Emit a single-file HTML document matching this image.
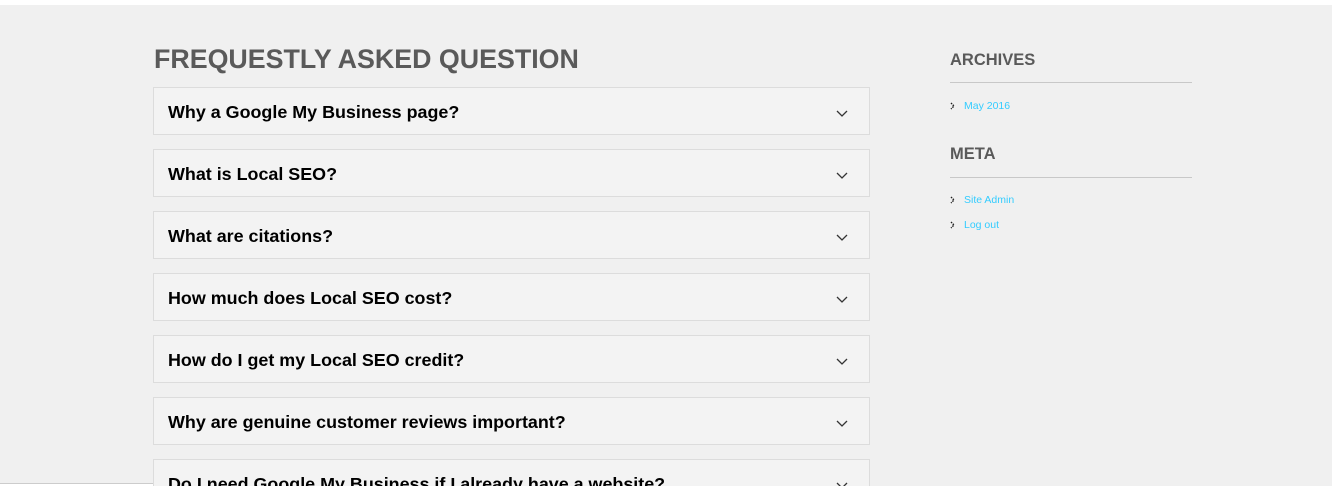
<!DOCTYPE html>
<html style="height:486px;overflow:hidden"><head><style>
body{margin:0;width:1332px;height:486px;overflow:hidden;background:#f0f0f0;font-family:"Liberation Sans",Arial,sans-serif;position:relative}
.top{position:absolute;left:0;top:0;width:1332px;height:5px;background:#fff}
h1{position:absolute;left:154px;top:44px;margin:0;font-size:26.8px;font-weight:bold;color:#5a5a5a}
.q{position:absolute;left:153px;width:715px;height:46px;border:1px solid #dcdcdc;background:#f3f3f3}
.q span{position:absolute;left:14px;top:14px;font-size:17.9px;font-weight:bold;color:#000}
.q svg{position:absolute;left:682px;top:22px}
.side{position:absolute;left:950px;width:242px}
.side h3{margin:0;font-size:16.5px;font-weight:bold;color:#5a5a5a}
.side hr{border:0;border-top:1px solid #c8c8c8;margin:0}
.li{position:absolute;left:950px;font-size:10.5px;color:#33ccff}
.li svg{position:absolute;left:0;top:2px}
.li b{font-weight:normal;margin-left:14px}
.bl{position:absolute;left:0;top:483px;width:153px;height:3px;background:#fff;border-top:1px solid #ccc}
</style></head><body>
<div class="top"></div>
<h1>FREQUESTLY ASKED QUESTION</h1>
<div class="q" style="top:87px"><span>Why a Google My Business page?</span><svg width="12" height="8"><path d="M1 1L6 6L11 1" stroke="#333" stroke-width="1.3" fill="none"/></svg></div>
<div class="q" style="top:149px"><span>What is Local SEO?</span><svg width="12" height="8"><path d="M1 1L6 6L11 1" stroke="#333" stroke-width="1.3" fill="none"/></svg></div>
<div class="q" style="top:211px"><span>What are citations?</span><svg width="12" height="8"><path d="M1 1L6 6L11 1" stroke="#333" stroke-width="1.3" fill="none"/></svg></div>
<div class="q" style="top:273px"><span>How much does Local SEO cost?</span><svg width="12" height="8"><path d="M1 1L6 6L11 1" stroke="#333" stroke-width="1.3" fill="none"/></svg></div>
<div class="q" style="top:335px"><span>How do I get my Local SEO credit?</span><svg width="12" height="8"><path d="M1 1L6 6L11 1" stroke="#333" stroke-width="1.3" fill="none"/></svg></div>
<div class="q" style="top:397px"><span>Why are genuine customer reviews important?</span><svg width="12" height="8"><path d="M1 1L6 6L11 1" stroke="#333" stroke-width="1.3" fill="none"/></svg></div>
<div class="q" style="top:459px"><span>Do I need Google My Business if I already have a website?</span><svg width="12" height="8"><path d="M1 1L6 6L11 1" stroke="#333" stroke-width="1.3" fill="none"/></svg></div>
<div class="bl"></div>
<div class="side" style="top:51px"><h3>ARCHIVES</h3></div>
<div class="side" style="top:82px"><hr></div>
<div class="li" style="top:100px"><svg width="6" height="8"><path d="M1 1L4 4L1 7" stroke="#222" stroke-width="1.4" stroke-dasharray="1.5 1" fill="none"/></svg><b>May 2016</b></div>
<div class="side" style="top:145px"><h3>META</h3></div>
<div class="side" style="top:177px"><hr></div>
<div class="li" style="top:194px"><svg width="6" height="8"><path d="M1 1L4 4L1 7" stroke="#222" stroke-width="1.4" stroke-dasharray="1.5 1" fill="none"/></svg><b>Site Admin</b></div>
<div class="li" style="top:219px"><svg width="6" height="8"><path d="M1 1L4 4L1 7" stroke="#222" stroke-width="1.4" stroke-dasharray="1.5 1" fill="none"/></svg><b>Log out</b></div>
</body></html>
